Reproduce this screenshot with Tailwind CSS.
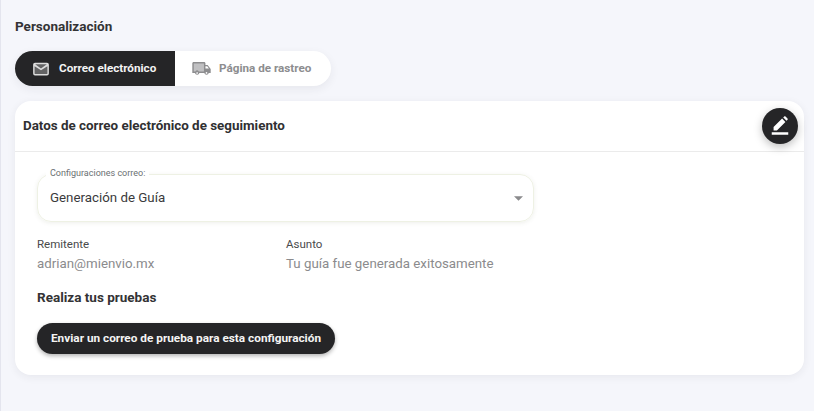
<!DOCTYPE html>
<html lang="en">
<head>
    <meta charset="UTF-8">
    <title>Personalización</title>
    <script src="https://cdn.jsdelivr.net/npm/@tailwindcss/browser@4"></script>
</head>
<body class="bg-[#f5f6fb] font-['Roboto',sans-serif] text-[#2a2a2c] w-[814px] h-[411px] overflow-hidden">
    <div class="h-[411px] pl-[14px] pr-[9px] pt-[19px] border-l border-[#e4e5ee]">
        <h2 class="text-[13.5px] leading-[15px] font-bold text-[#333335]">Personalización</h2>

        <!-- tabs -->
        <div class="flex mt-[17px] w-[316px] h-[35px] bg-white rounded-full shadow-[0_3px_10px_rgba(40,40,60,0.07)] text-[11.7px] font-bold">
            <div class="flex items-center w-[160px] h-full pl-[17px] bg-[#252527] text-[#f4f4f4] rounded-l-full">
                <svg class="w-[18px] h-[18px] mr-[9px]" viewBox="0 0 24 24"><path fill="#d8d8d8" fill-opacity="0.35" d="M3 5h18v14H3z"/><path fill="#dcdcdc" d="M20 3.500H4A2.500 2.500 0 0 0 1.500 6v12A2.500 2.500 0 0 0 4 20.500h16a2.500 2.500 0 0 0 2.500-2.500V6A2.500 2.500 0 0 0 20 3.500zm.5 14.500a.5.500 0 0 1-.5.500H4a.5.500 0 0 1-.5-.500V8.300l8.500 5.300 8.500-5.300zM12 11.300 4.200 5.500h15.600z"/></svg>
                <span>Correo electrónico</span>
            </div>
            <div class="flex items-center pl-[16px] text-[#8d8d8f]">
                <svg class="w-[21px] h-[21px] mr-[7px]" viewBox="0 0 24 24"><path fill="#8d8d8f" fill-opacity="0.55" d="M2.500 5.500h13v11h-13z"/><path fill="#8d8d8f" d="M3 4.500h12c.8 0 1.500.7 1.500 1.500v2H19l3.500 4.500V17H20.300a2.600 2.600 0 0 1-5.100 0H9.600a2.600 2.600 0 0 1-5.100 0H1.500V6c0-.8.700-1.500 1.500-1.500zm.2 1.700v9.100h1.800a2.600 2.600 0 0 1 4 0h5.800V6.200zM7 16a1 1 0 1 0 0 2 1 1 0 0 0 0-2zm10.700 0a1 1 0 1 0 0 2 1 1 0 0 0 0-2zM16.500 9.500V12h4l-2-2.500z"/></svg>
                <span>Página de rastreo</span>
            </div>
        </div>

        <!-- card -->
        <div class="mt-[15px] w-[789px] h-[274px] bg-white rounded-[16px] shadow-[0_2px_8px_rgba(40,40,60,0.07)]">
            <div class="relative flex items-center h-[51px] pl-[8px] border-b border-[#ebebeb]">
                <h3 class="text-[13.4px] font-bold text-[#303032]">Datos de correo electrónico de seguimiento</h3>
                <button class="absolute right-[6px] top-[7px] flex items-center justify-center w-[36px] h-[36px] rounded-full bg-[#252527] shadow-[0_3px_8px_rgba(0,0,0,0.25)]">
                    <svg class="w-[22px] h-[22px]" viewBox="0 0 24 24" fill="#fff"><path d="M3 18.800h18v2.700H3zM5 16.800v-3.600l9.300-9.300 3.600 3.600-9.300 9.300zM15.500 2.700l1.100-1.100c.4-.4 1-.4 1.400 0l2.200 2.200c.4.4.4 1 0 1.400l-1.100 1.100z"/></svg>
                </button>
            </div>

            <div class="pl-[22px] pt-[22px]">
                <!-- select -->
                <div class="relative flex items-center justify-between w-[497px] h-[48px] pl-[12px] pr-[10px] rounded-[14px] border border-[#eef1e4] shadow-[0_1px_4px_rgba(90,100,60,0.1)]">
                    <span class="absolute left-[8px] top-[-8px] px-[4px] bg-white text-[9px] leading-[12px] text-[#6a7072]">Configuraciones correo:</span>
                    <span class="text-[13.3px] text-[#3a3a3c]">Generación de Guía</span>
                    <svg class="w-[9px] h-[5px]" viewBox="0 0 10 5" fill="#8a8a8c"><path d="M0 0h10L5 5z"/></svg>
                </div>

                <div class="flex mt-[15px]">
                    <div class="w-[249px]">
                        <p class="text-[11.5px] leading-[14px] text-[#4a4a4c]">Remitente</p>
                        <p class="mt-[5px] text-[13.3px] leading-[16px] text-[#8b8b8d]">adrian@mienvio.mx</p>
                    </div>
                    <div>
                        <p class="text-[11.5px] leading-[14px] text-[#4a4a4c]">Asunto</p>
                        <p class="mt-[5px] text-[13.3px] leading-[16px] text-[#8b8b8d]">Tu guía fue generada exitosamente</p>
                    </div>
                </div>

                <h4 class="mt-[18px] text-[13.5px] leading-[15px] font-bold text-[#333335]">Realiza tus pruebas</h4>

                <button class="block mt-[18px] w-[298px] h-[31px] rounded-full bg-[#252527] text-[#f4f4f4] text-[11.8px] font-bold shadow-[0_2px_4px_rgba(0,0,0,0.3)]">Enviar un correo de prueba para esta configuración</button>
            </div>
        </div>
    </div>
</body>
</html>
